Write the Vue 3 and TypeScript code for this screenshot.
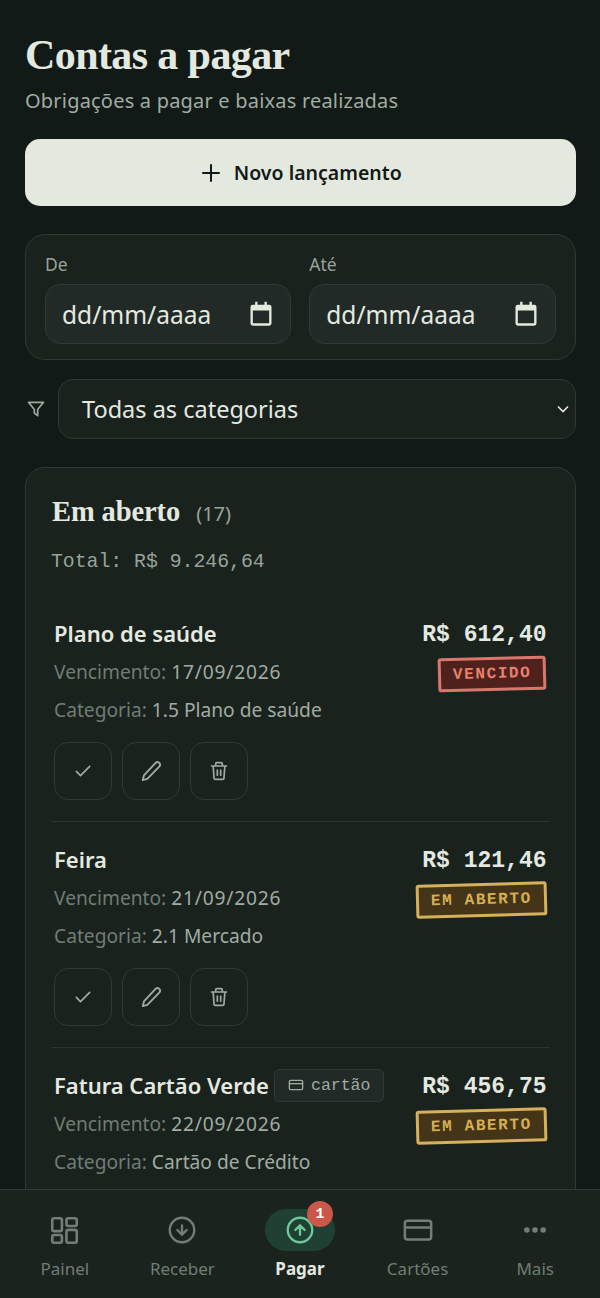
<template>
  <div class="shell">
    <main class="page">
      <h1 class="title">Contas a pagar</h1>
      <p class="subtitle">Obrigações a pagar e baixas realizadas</p>

      <button class="new-btn" type="button">
        <svg width="24" height="24" viewBox="0 0 24 24" fill="none" stroke="currentColor" stroke-width="2" stroke-linecap="round"><path d="M4 12h16M12 4v16" /></svg>
        Novo lançamento
      </button>

      <section class="dates">
        <div v-for="label in ['De', 'Até']" :key="label" class="date-field">
          <span class="date-label">{{ label }}</span>
          <div class="date-input">
            <span>dd/mm/aaaa</span>
            <svg width="28" height="28" viewBox="0 0 24 24" fill="currentColor"><path d="M7 1.5h2V4h6V1.5h2V4h2a2 2 0 0 1 2 2v14a2 2 0 0 1-2 2H5a2 2 0 0 1-2-2V6a2 2 0 0 1 2-2h2V1.5ZM5 9v11h14V9H5Z" /></svg>
          </div>
        </div>
      </section>

      <div class="filter">
        <svg class="filter-icon" width="20" height="20" viewBox="0 0 24 24" fill="none" stroke="currentColor" stroke-width="2" stroke-linejoin="round"><path d="M3 4h18l-7 8.5V20l-4-3v-4.5L3 4Z" /></svg>
        <div class="select">
          <span>Todas as categorias</span>
          <svg width="16" height="16" viewBox="0 0 16 16" fill="none" stroke="currentColor" stroke-width="1.6"><path d="m3 5.5 5 5 5-5" /></svg>
        </div>
      </div>

      <section class="list">
        <header class="list-head">
          <h2>Em aberto</h2>
          <span class="list-count">(17)</span>
        </header>
        <p class="list-total">Total: R$ 9.246,64</p>

        <article v-for="bill in bills" :key="bill.name" class="bill">
          <div class="bill-top">
            <div class="bill-info">
              <div class="bill-name">
                {{ bill.name }}
                <span v-if="bill.card" class="card-tag">
                  <svg width="16" height="16" viewBox="0 0 24 24" fill="none" stroke="currentColor" stroke-width="2"><rect x="2" y="5" width="20" height="14" rx="2" /><path d="M2 10h20" /></svg>
                  cartão
                </span>
              </div>
              <p class="bill-line">Vencimento: <b class="due">{{ bill.due }}</b></p>
              <p class="bill-line">Categoria: <b>{{ bill.category }}</b></p>
            </div>
            <div class="bill-side">
              <span class="bill-value">{{ bill.value }}</span>
              <span class="stamp" :class="bill.late ? 'late' : 'open'">{{ bill.late ? 'VENCIDO' : 'EM ABERTO' }}</span>
            </div>
          </div>
          <div class="actions">
            <button type="button" aria-label="Baixar">
              <svg width="20" height="20" viewBox="0 0 24 24" fill="none" stroke="currentColor" stroke-width="2" stroke-linecap="round" stroke-linejoin="round"><path d="m4 12.5 5 5L20 6.5" /></svg>
            </button>
            <button type="button" aria-label="Editar">
              <svg width="22" height="22" viewBox="0 0 24 24" fill="none" stroke="currentColor" stroke-width="2" stroke-linecap="round" stroke-linejoin="round"><path d="M17 3.2a2.8 2.8 0 0 1 4 4L8 20.5 3 22l1.3-5.2L17 3.2Z" /></svg>
            </button>
            <button type="button" aria-label="Excluir">
              <svg width="20" height="20" viewBox="0 0 24 24" fill="none" stroke="currentColor" stroke-width="2" stroke-linecap="round" stroke-linejoin="round"><path d="M3 6h18M8 6V3.500A1.500 1.500 0 0 1 9.500 2h5A1.500 1.500 0 0 1 16 3.500V6M5 6l1 14a2 2 0 0 0 2 2h8a2 2 0 0 0 2-2l1-14M10 11v6M14 11v6" /></svg>
            </button>
          </div>
        </article>
      </section>
    </main>

    <nav class="nav">
      <a class="nav-item">
        <span class="nav-icon">
          <svg width="31" height="31" viewBox="0 0 24 24" fill="none" stroke="currentColor" stroke-width="2" stroke-linejoin="round"><rect x="2.500" y="2.500" width="7.500" height="10" rx="1.500" /><rect x="13.500" y="2.500" width="8" height="6" rx="1.500" /><rect x="13.500" y="11.500" width="8" height="10" rx="1.500" /><rect x="2.500" y="15.500" width="7.500" height="6" rx="1.500" /></svg>
        </span>
        Painel
      </a>
      <a class="nav-item">
        <span class="nav-icon">
          <svg width="28" height="28" viewBox="0 0 24 24" fill="none" stroke="currentColor" stroke-width="2" stroke-linecap="round" stroke-linejoin="round"><circle cx="12" cy="12" r="10.500" /><path d="m8 12 4 4 4-4M12 8v8" /></svg>
        </span>
        Receber
      </a>
      <a class="nav-item active">
        <span class="nav-icon">
          <svg width="28" height="28" viewBox="0 0 24 24" fill="none" stroke="currentColor" stroke-width="2" stroke-linecap="round" stroke-linejoin="round"><circle cx="12" cy="12" r="10.500" /><path d="m8 12 4-4 4 4M12 16V8" /></svg>
          <span class="badge">1</span>
        </span>
        Pagar
      </a>
      <a class="nav-item">
        <span class="nav-icon">
          <svg width="30" height="30" viewBox="0 0 24 24" fill="none" stroke="currentColor" stroke-width="2" stroke-linejoin="round"><rect x="1.500" y="4.500" width="21" height="15" rx="2" /><path d="M1.500 10h21" /></svg>
        </span>
        Cartões
      </a>
      <a class="nav-item">
        <span class="nav-icon">
          <svg width="28" height="28" viewBox="0 0 24 24" fill="currentColor"><circle cx="5" cy="12" r="2.400" /><circle cx="12" cy="12" r="2.400" /><circle cx="19" cy="12" r="2.400" /></svg>
        </span>
        Mais
      </a>
    </nav>
  </div>
</template>

<script setup lang="ts">
interface Bill {
  name: string,
  due: string,
  category: string,
  value: string,
  late?: boolean,
  card?: boolean
}

const bills: Bill[] = [
  {name: 'Plano de saúde', due: '17/09/2026', category: '1.5 Plano de saúde', value: 'R$ 612,40', late: true},
  {name: 'Feira', due: '21/09/2026', category: '2.1 Mercado', value: 'R$ 121,46'},
  {name: 'Fatura Cartão Verde', due: '22/09/2026', category: 'Cartão de Crédito', value: 'R$ 456,75', card: true}
];
</script>

<style>
html, body {
  margin: 0;
  background: #121a17;
}
</style>

<style scoped>
.shell {
  height: 100vh;
  display: flex;
  flex-direction: column;
  overflow: hidden;
  background: #121a17;
  color: #e4e9e0;
  font-family: "Noto Sans", Roboto, sans-serif;
}

.page {
  flex: 1;
  min-height: 0;
  overflow: hidden;
  padding: 30px 24.500px 0 25px;
}

.title {
  margin: 0;
  font: 700 42px/50px "Liberation Serif", serif;
  letter-spacing: -0.600px;
  color: #e4e9e0;
}

.subtitle {
  margin: 6px 0 0;
  font-size: 20px;
  letter-spacing: 0.200px;
  line-height: 30px;
  color: #a0aca2;
}

.new-btn {
  width: 100%;
  height: 67px;
  margin-top: 23px;
  display: flex;
  align-items: center;
  justify-content: center;
  gap: 11px;
  border: 0;
  border-radius: 15px;
  background: #e4e9e0;
  color: #121a17;
  font: 600 19.500px "Noto Sans", sans-serif;
}

.dates {
  margin-top: 28px;
  height: 126px;
  box-sizing: border-box;
  padding: 16px 19px;
  display: grid;
  grid-template-columns: 1fr 1fr;
  gap: 18px;
  border: 1.500px solid #303a35;
  border-radius: 20px;
  background: #1a221e;
}

.date-label {
  display: block;
  font-size: 17.500px;
  line-height: 26px;
  color: #97a399;
}

.date-input {
  height: 60px;
  margin-top: 7px;
  box-sizing: border-box;
  padding: 0 15px 0 16px;
  display: flex;
  align-items: center;
  justify-content: space-between;
  border: 1.500px solid #303a35;
  border-radius: 15px;
  background: #212a26;
  font-size: 24.500px;
  color: #e4e9e0;
}

.filter {
  margin-top: 19px;
  display: flex;
  align-items: center;
  gap: 12px;
}

.filter-icon {
  flex: none;
  margin-left: 1px;
  color: #a0aca2;
}

.select {
  flex: 1;
  height: 60px;
  box-sizing: border-box;
  padding: 0 4px 0 23px;
  display: flex;
  align-items: center;
  justify-content: space-between;
  border: 1.500px solid #303a35;
  border-radius: 15px;
  background: #1a221e;
  font-size: 23.500px;
}

.list {
  margin-top: 28px;
  box-sizing: border-box;
  padding: 26px 25px 0;
  border: 1.500px solid #303a35;
  border-radius: 20px;
  background: #1a221e;
}

.list-head {
  display: flex;
  align-items: baseline;
  gap: 16px;
}

.list-head h2 {
  margin: 0 0 0 1px;
  font: 700 28.500px/36px "Liberation Serif", serif;
  letter-spacing: -0.100px;
}

.list-count {
  font-size: 20px;
  color: #97a399;
}

.list-total {
  margin: 16px 0 0;
  font: 19.800px/32px "Liberation Mono", monospace;
  color: #97a399;
}

.bill {
  padding: 21px 3px 21px 3px;
  border-bottom: 1.500px solid #2b3530;
}

.list-total + .bill {
  padding-top: 39px;
}

.bill:last-child {
  border-bottom: 0;
}

.bill-top {
  display: flex;
  justify-content: space-between;
}

.bill-name {
  display: flex;
  align-items: center;
  gap: 5px;
  height: 32px;
  font-size: 22px;
  font-weight: 600;
}

.card-tag {
  height: 33px;
  box-sizing: border-box;
  padding: 0 13px;
  display: inline-flex;
  align-items: center;
  gap: 7px;
  border: 1.500px solid #303a35;
  border-radius: 5px;
  background: #212a26;
  font: 16.500px "Liberation Mono", monospace;
  color: #a0aca2;
}

.bill-line {
  margin: 7px 0 0;
  font-size: 19.200px;
  line-height: 31px;
  color: #6f7d73;
}

.bill-line b {
  font-weight: 400;
  color: #a0aca2;
}

.bill-line .due {
  letter-spacing: 0.800px;
}

.bill-side {
  display: flex;
  flex-direction: column;
  align-items: flex-end;
  padding-top: 2px;
}

.bill-value {
  height: 32px;
  font: 700 23px/32px "Liberation Mono", monospace;
}

.stamp {
  margin-top: 6px;
  height: 34px;
  box-sizing: border-box;
  padding: 0 12px;
  display: flex;
  align-items: center;
  border: 3px solid;
  border-radius: 3px;
  font: 700 16px "Liberation Mono", monospace;
  letter-spacing: 1.600px;
  transform: rotate(-1.500deg);
}

.stamp.late {
  border-color: #d9776c;
  background: #4e211d;
  color: #e8806f;
}

.stamp.open {
  border-color: #d6b05a;
  background: #443519;
  color: #d8ae52;
}

.actions {
  margin-top: 17px;
  display: flex;
  gap: 10px;
}

.actions button {
  width: 58px;
  height: 58px;
  display: flex;
  align-items: center;
  justify-content: center;
  padding: 0;
  border: 1.500px solid #303a35;
  border-radius: 14px;
  background: transparent;
  color: #a0aca2;
}

.nav {
  flex: none;
  height: 109px;
  box-sizing: border-box;
  padding: 19px 6px 0;
  display: grid;
  grid-template-columns: repeat(5, 1fr);
  justify-items: center;
  align-content: start;
  border-top: 1.500px solid #303a35;
  background: #1a231e;
}

.nav-item {
  display: flex;
  flex-direction: column;
  align-items: center;
  gap: 5px;
  font-size: 17px;
  line-height: 26px;
  color: #6f7d73;
}

.nav-icon {
  position: relative;
  width: 70px;
  height: 42px;
  display: flex;
  align-items: center;
  justify-content: center;
  border-radius: 21px;
  color: #747e78;
}

.nav-item.active {
  font-weight: 700;
  color: #e4e9e0;
}

.nav-item.active .nav-icon {
  background: #1f4032;
  color: #6fc79a;
}

.badge {
  position: absolute;
  top: -8px;
  right: 2px;
  width: 26px;
  height: 26px;
  display: flex;
  align-items: center;
  justify-content: center;
  border-radius: 50%;
  background: #c9574a;
  color: #fff;
  font: 700 15px "Liberation Mono", monospace;
}
</style>
